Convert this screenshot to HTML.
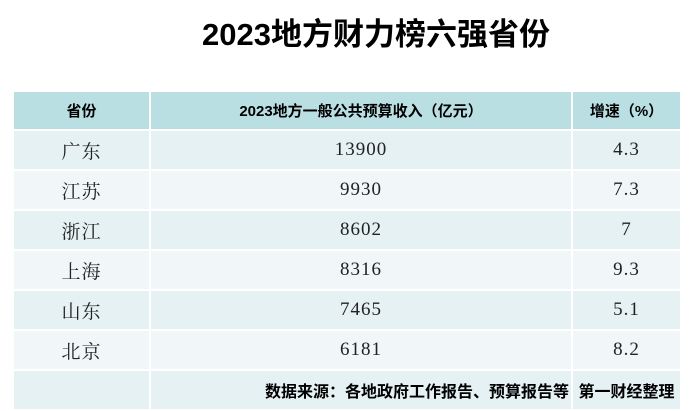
<html><head><style>
body{margin:0;width:695px;height:409px;background:#fff;overflow:hidden;font-family:"Liberation Sans","Noto Sans CJK SC",sans-serif}
.t{position:absolute;top:14px;left:0;width:752px;text-align:center;font-size:31px;font-weight:bold;color:#000;line-height:42px}
table{position:absolute;left:12px;top:90px;border-collapse:collapse;width:670px}
td{border:2px solid #fff;text-align:center;padding:0}
tr.h td{background:#badfe2;height:39px;font-weight:bold;font-size:15px}
tr.d td{height:40px;font-family:"Liberation Serif","Noto Serif CJK SC",serif;font-size:19px;color:#222;letter-spacing:1px}
tr.a td{background:#e5f1f3}
tr.b td{background:#f1f7f9}
tr.f td{background:#e5f1f3;height:40px;font-weight:bold;font-size:16px}
</style></head><body>
<div class="t">2023地方财力榜六强省份</div>
<table>
<tr class="h"><td style="width:135px">省份</td><td style="width:420px">2023地方一般公共预算收入（亿元）</td><td>增速（%）</td></tr>
<tr class="d a"><td>广东</td><td>13900</td><td>4.3</td></tr>
<tr class="d b"><td>江苏</td><td>9930</td><td>7.3</td></tr>
<tr class="d a"><td>浙江</td><td>8602</td><td>7</td></tr>
<tr class="d b"><td>上海</td><td>8316</td><td>9.3</td></tr>
<tr class="d a"><td>山东</td><td>7465</td><td>5.1</td></tr>
<tr class="d b"><td>北京</td><td>6181</td><td>8.2</td></tr>
<tr class="f"><td></td><td style="text-align:right;padding-right:2px">数据来源：各地政府工作报告、预算报告等</td><td>第一财经整理</td></tr>
</table>
</body></html>
